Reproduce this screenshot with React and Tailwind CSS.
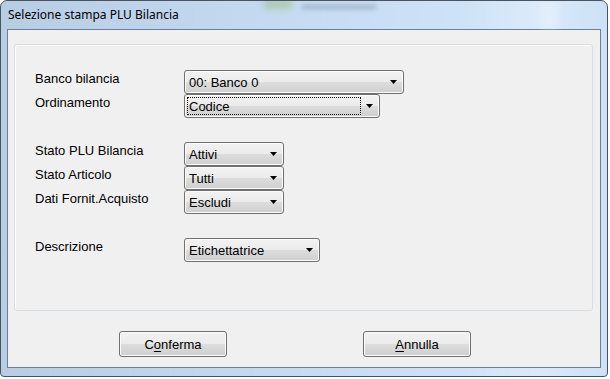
import React from "react";

const Arrow = () => (
  <svg width="7" height="4" viewBox="0 0 7 4" className="shrink-0">
    <polygon points="0,0 7,0 3.5,4" fill="#000" />
  </svg>
);

function Combo({ width, text, focused }) {
  return (
    <div
      className="relative h-[24px] flex items-start border border-[#707070] rounded-[3px] bg-[linear-gradient(to_bottom,#f2f2f2_0%,#ebebeb_50%,#dddddd_50%,#cfcfcf_100%)] shadow-[inset_0_0_0_1px_#fbfbfb]"
      style={{ width }}
    >
      <div className="flex-1 pl-[4px] pt-[4px] text-[13px] leading-[15px] text-black whitespace-nowrap">
        {text}
      </div>
      <div className="w-[17px] h-full flex items-center justify-center pr-[2px]">
        <Arrow />
      </div>
      {focused && (
        <div className="absolute left-[2px] top-[2px] bottom-[2px] right-[18px] border border-dotted border-black" />
      )}
    </div>
  );
}

function Row({ label, width, text, focused }) {
  return (
    <div className="flex h-[24px]">
      <div className="w-[149px] pt-[1px] text-[13px] leading-[15px] text-black whitespace-nowrap">
        {label}
      </div>
      <Combo width={width} text={text} focused={focused} />
    </div>
  );
}

function Button({ children }) {
  return (
    <div className="w-[108px] h-[26px] flex items-center justify-center border border-[#707070] rounded-[3px] bg-[linear-gradient(to_bottom,#f2f2f2_0%,#ebebeb_50%,#dddddd_50%,#cfcfcf_100%)] shadow-[inset_0_0_0_1px_#fbfbfb] text-[13px] leading-[15px] text-black">
      {children}
    </div>
  );
}

export default function App() {
  return (
    <div className="w-[610px] h-[379px] bg-white font-['Liberation_Sans',Arial,sans-serif]">
      <div className="relative w-[608px] h-[377px] flex flex-col border border-[#4a5360] rounded-t-[7px] rounded-b-[4px] overflow-hidden bg-[linear-gradient(to_right,#b7cde4_0%,#c3d9f0_40%,#cde2f7_75%,#dbeafa_88%,#cde1f6_100%)]">
        {/* title bar */}
        <div className="relative h-[28px] shrink-0 flex items-center pl-[7px]">
          <div className="absolute left-[262px] top-[-2px] w-[30px] h-[10px] rounded-full bg-[#9fbf8a] opacity-60 blur-[3px]" />
          <div className="absolute left-[300px] top-[3px] w-[76px] h-[6px] rounded-full bg-[#8ea3b8] opacity-50 blur-[2px]" />
          <div className="absolute left-[540px] top-0 w-[18px] h-[28px] bg-white opacity-30 blur-[4px]" />
          <span className="relative text-[12px] leading-[16px] text-black font-['Noto_Sans',sans-serif] pb-[1px]">
            Selezione stampa PLU Bilancia
          </span>
        </div>
        {/* client area */}
        <div className="flex-1 mx-[6px] mb-[8px] border border-[#6f7f91] bg-[#f0f0f0] flex flex-col">
          <div className="ml-[6px] mt-[14px] w-[579px] h-[267px] rounded-[3px] border border-[#d5dfe5] shadow-[inset_1px_1px_0_#ffffff] pl-[20px] pt-[25px] flex flex-col">
            <Row label="Banco bilancia" width={220} text="00: Banco 0" />
            <Row label="Ordinamento" width={196} text="Codice" focused />
            <div className="h-[24px]" />
            <Row label="Stato PLU Bilancia" width={100} text="Attivi" />
            <Row label="Stato Articolo" width={100} text="Tutti" />
            <Row label="Dati Fornit.Acquisto" width={100} text="Escludi" />
            <div className="h-[24px]" />
            <Row label="Descrizione" width={136} text="Etichettatrice" />
          </div>
          <div className="flex mt-[20px] ml-[111px] gap-[136px]">
            <Button>
              C<span className="underline underline-offset-[2px]">o</span>nferma
            </Button>
            <Button>
              <span className="underline underline-offset-[2px]">A</span>nnulla
            </Button>
          </div>
        </div>
      </div>
    </div>
  );
}
